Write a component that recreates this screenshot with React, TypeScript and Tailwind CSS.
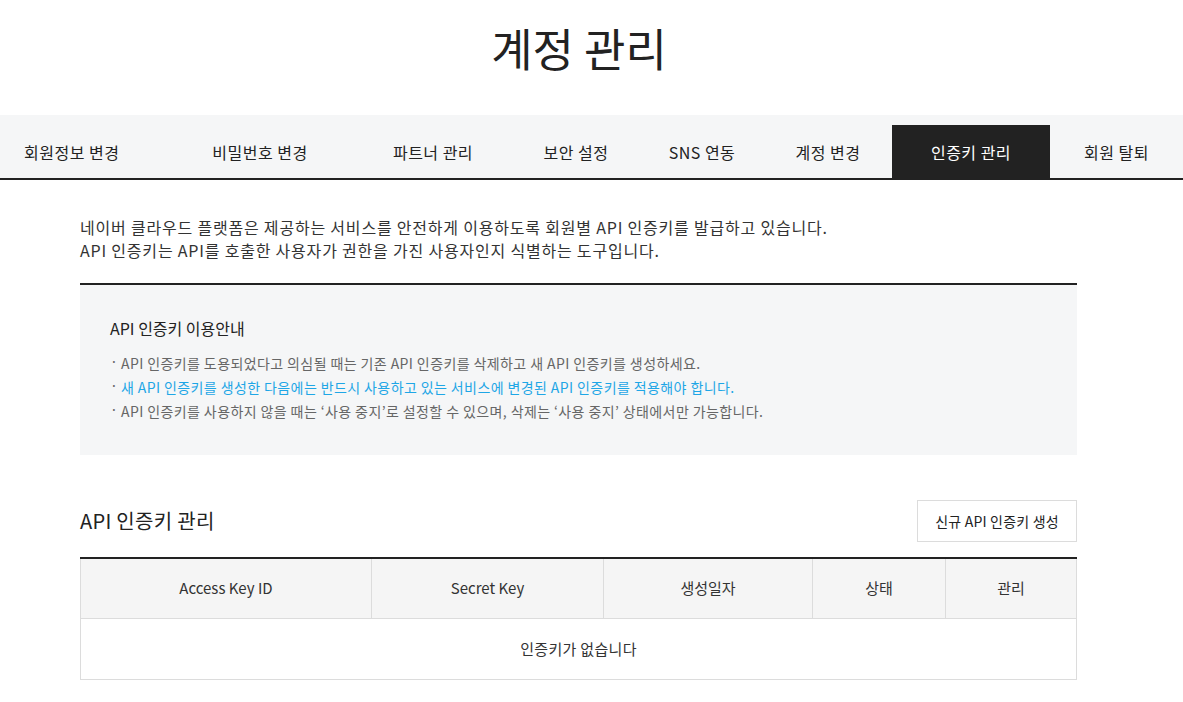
import React from "react";

const tabs = [
  { label: "회원정보 변경", w: "w-[166px]", align: "justify-start pl-[24px]" },
  { label: "비밀번호 변경", w: "w-[188px]", align: "justify-center" },
  { label: "파트너 관리", w: "w-[158px]", align: "justify-center" },
  { label: "보안 설정", w: "w-[128px]", align: "justify-center" },
  { label: "SNS 연동", w: "w-[124px]", align: "justify-center" },
  { label: "계정 변경", w: "w-[128px]", align: "justify-center" },
  { label: "인증키 관리", w: "w-[158px]", align: "justify-center", active: true },
  { label: "회원 탈퇴", w: "flex-1", align: "justify-center" },
];

const notices = [
  { text: "API 인증키를 도용되었다고 의심될 때는 기존 API 인증키를 삭제하고 새 API 인증키를 생성하세요.", blue: false },
  { text: "새 API 인증키를 생성한 다음에는 반드시 사용하고 있는 서비스에 변경된 API 인증키를 적용해야 합니다.", blue: true },
  { text: "API 인증키를 사용하지 않을 때는 ‘사용 중지’로 설정할 수 있으며, 삭제는 ‘사용 중지’ 상태에서만 가능합니다.", blue: false },
];

const columns = [
  { label: "Access Key ID", w: "w-[290px]" },
  { label: "Secret Key", w: "w-[232px]" },
  { label: "생성일자", w: "w-[209px]" },
  { label: "상태", w: "w-[133px]" },
  { label: "관리", w: "flex-1" },
];

export default function App() {
  return (
    <div className="min-h-[702px] bg-white text-[#222] font-['Noto_Sans_CJK_KR','Noto_Sans',sans-serif]">
      {/* Page title */}
      <h1 className="pt-[18px] pr-[25px] h-[115px] text-center text-[45px] leading-[60px] font-normal text-[#222]">
        계정 관리
      </h1>

      {/* Tabs */}
      <nav className="flex h-[65px] bg-[#f5f6f7] border-b-2 border-[#222] pt-[10px]">
        {tabs.map((t) => (
          <div
            key={t.label}
            className={`${t.w} ${t.align} flex items-center text-[16px] tracking-[0.5px] ${
              t.active ? "bg-[#222] text-white" : "text-[#222]"
            }`}
          >
            {t.label}
          </div>
        ))}
      </nav>

      <div className="ml-[80px] w-[997px]">
        {/* Intro */}
        <div className="pt-[36px] text-[16px] leading-[23px] tracking-[0.8px] text-[#333]">
          <p>네이버 클라우드 플랫폼은 제공하는 서비스를 안전하게 이용하도록 회원별 API 인증키를 발급하고 있습니다.</p>
          <p>API 인증키는 API를 호출한 사용자가 권한을 가진 사용자인지 식별하는 도구입니다.</p>
        </div>

        {/* Notice box */}
        <div className="mt-[21px] border-t-2 border-[#222] bg-[#f5f6f7] h-[172px] pl-[30px] pt-[30px]">
          <h3 className="text-[16px] leading-[26px] text-[#222] font-normal">API 인증키 이용안내</h3>
          <ul className="mt-[10px] text-[14px] leading-[24px] tracking-[0.4px]">
            {notices.map((n) => (
              <li key={n.text} className={`flex ${n.blue ? "text-[#1ea6e6]" : "text-[#666]"}`}>
                <span className="w-[11px] shrink-0 text-[#666] -translate-y-[2px]">·</span>
                <span>{n.text}</span>
              </li>
            ))}
          </ul>
        </div>

        {/* Key management */}
        <div className="mt-[45px] flex items-center justify-between h-[42px]">
          <h2 className="text-[20px] tracking-[0.3px] font-normal text-[#222]">API 인증키 관리</h2>
          <button className="h-[42px] w-[160px] border border-[#dcdcdc] bg-white text-[14px] tracking-[0.2px] text-[#222]">
            신규 API 인증키 생성
          </button>
        </div>

        <div className="mt-[15px] border-t-2 border-[#222]">
          <div className="flex h-[60px] bg-[#f5f5f5] border-b border-[#dcdcdc] border-l border-r">
            {columns.map((c, i) => (
              <div
                key={c.label}
                className={`${c.w} flex items-center justify-center text-[15px] text-[#333] ${
                  i > 0 ? "border-l border-[#dcdcdc]" : ""
                }`}
              >
                {c.label}
              </div>
            ))}
          </div>
          <div className="flex h-[61px] items-center justify-center border-b border-l border-r border-[#dcdcdc] text-[15px] tracking-[0.3px] text-[#333]">
            인증키가 없습니다
          </div>
        </div>
      </div>
    </div>
  );
}
